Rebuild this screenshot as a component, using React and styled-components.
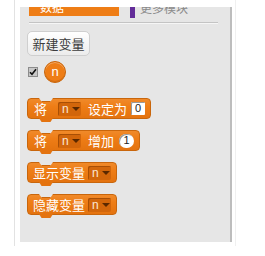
import React from "react";
import styled, { createGlobalStyle } from "styled-components";

const Global = createGlobalStyle`
  html, body { margin: 0; padding: 0; background: #ffffff; }
  body { width: 265px; height: 256px; overflow: hidden; font-family: "Noto Sans CJK SC", "Liberation Sans", sans-serif; }
`;

const ORANGE = "#ee7d16";
const ORANGE_DARK = "#c9660c";
const PANEL = "#e6e6e6";

const Frame = styled.div`
  margin-left: 14px;
  width: 222px;
  height: 246px;
  padding: 7px 0 0 5px;
  box-sizing: border-box;
  border-left: 1px solid #e2e2e2;
  border-right: 1px solid #f0f0f0;
`;

const Panel = styled.div`
  width: 212px;
  height: 235px;
  box-sizing: border-box;
  background: ${PANEL};
  border-right: 2px solid #bdbdbd;
  overflow: hidden;
  padding-left: 7px;
  display: flex;
  flex-direction: column;
  align-items: flex-start;
`;

const CategoryRow = styled.div`
  display: flex;
  align-items: center;
  margin-top: -9px;
  margin-left: 2px;
  height: 18px;
  gap: 11px;
`;

const CategoryButton = styled.div`
  width: 90px;
  height: 18px;
  box-sizing: border-box;
  padding-left: 11px;
  line-height: 18px;
  font-size: 12px;
  color: #ffffff;
  background: ${(p) => (p.$active ? p.$color : "transparent")};
  border-left: ${(p) => (p.$active ? "none" : `5px solid ${p.$color}`)};
  ${(p) => (!p.$active ? "padding-left: 5px; color: #8a8a8a; height: 20px; line-height: 20px; margin-top: 2px;" : "")}
`;

const Separator = styled.div`
  width: 189px;
  height: 1px;
  margin: 6px 0 0 2px;
  background: #c4c4c4;
  box-shadow: 0 1px 0 #f6f6f6;
`;

const NewButton = styled.button`
  margin-top: 8px;
  width: 63px;
  height: 25px;
  padding: 0;
  border: 1px solid #cfcfcf;
  border-radius: 5px;
  background: linear-gradient(#ffffff, #ececec);
  font-family: "Noto Sans CJK SC", sans-serif;
  font-size: 13px;
  color: #3c3c3c;
  line-height: 23px;
`;

const ReporterRow = styled.div`
  margin-top: 5px;
  margin-left: 1px;
  display: flex;
  align-items: center;
  gap: 6px;
`;

const Check = styled.span`
  width: 10px;
  height: 10px;
  box-sizing: border-box;
  border: 1px solid #8c8c8c;
  background: #c8c8c8;
  display: flex;
  align-items: center;
  justify-content: center;
`;

const Reporter = styled.div`
  width: 22px;
  height: 22px;
  box-sizing: border-box;
  border-radius: 50%;
  background: ${ORANGE};
  border: 1px solid ${ORANGE_DARK};
  box-shadow: inset 0 1px 0 rgba(255,255,255,0.35), inset 0 -1px 0 rgba(0,0,0,0.12);
  color: #fff;
  font-family: "Liberation Sans", sans-serif;
  font-size: 13px;
  line-height: 20px;
  text-align: center;
`;

const Block = styled.div`
  position: relative;
  margin-top: ${(p) => p.$top}px;
  height: 21px;
  box-sizing: border-box;
  padding: 0 5px 0 5px;
  display: flex;
  align-items: center;
  background: linear-gradient(#f08a2a, ${ORANGE} 40%, #e4730f);
  border: 1px solid ${ORANGE_DARK};
  border-radius: 4px;
  color: #ffffff;
  font-size: 13px;
  &::before {
    content: "";
    position: absolute;
    top: -1px;
    left: 11px;
    width: 14px;
    height: 3px;
    background: ${PANEL};
    border-bottom: 1px solid ${ORANGE_DARK};
    clip-path: polygon(0 0, 100% 0, 80% 100%, 20% 100%);
  }
  &::after {
    content: "";
    position: absolute;
    top: 100%;
    left: 11px;
    width: 14px;
    height: 4px;
    background: #e4730f;
    border-radius: 0 0 4px 4px;
    box-shadow: 0 1px 0 ${ORANGE_DARK};
    clip-path: polygon(0 0, 100% 0, 80% 100%, 20% 100%);
  }
`;

const Label = styled.span`
  margin-left: ${(p) => p.$ml || 0}px;
  line-height: 19px;
  white-space: nowrap;
`;

const Dropdown = styled.span`
  margin-left: ${(p) => p.$ml || 0}px;
  width: 23px;
  height: 14px;
  box-sizing: border-box;
  border-radius: 2px;
  background: #d2660b;
  box-shadow: inset 1px 1px 0 #a84f05;
  display: flex;
  align-items: center;
  padding-left: 4px;
  gap: 3px;
  font-family: "Liberation Sans", sans-serif;
  font-size: 12px;
  color: #fbe8d4;
`;

const Arrow = styled.span`
  width: 0;
  height: 0;
  border-left: 4px solid transparent;
  border-right: 4px solid transparent;
  border-top: 4px solid #5a2800;
`;

const NumberBox = styled.span`
  margin-left: ${(p) => p.$ml || 0}px;
  width: 14px;
  height: 13px;
  box-sizing: border-box;
  background: #ffffff;
  border-radius: ${(p) => (p.$round ? "7px" : "1px")};
  ${(p) => (p.$round ? "width: 15px; height: 14px;" : "")}
  box-shadow: inset 1px 1px 0 #9a9a9a;
  color: #222;
  font-family: "Liberation Sans", sans-serif;
  font-size: 11px;
  line-height: 13px;
  text-align: center;
`;

export default function App() {
  return (
    <>
      <Global />
      <Frame>
        <Panel>
          <CategoryRow>
            <CategoryButton $active $color={ORANGE}>数据</CategoryButton>
            <CategoryButton $color="#632d99">更多模块</CategoryButton>
          </CategoryRow>
          <Separator />
          <NewButton>新建变量</NewButton>
          <ReporterRow>
            <Check>
              <svg width="8" height="8" viewBox="0 0 8 8">
                <path d="M1 4.2 L3 6.3 L7 1.3" stroke="#111" strokeWidth="1.6" fill="none" />
              </svg>
            </Check>
            <Reporter>n</Reporter>
          </ReporterRow>
          <Block $top={15}>
            <Label $ml={1}>将</Label>
            <Dropdown $ml={11}>n<Arrow /></Dropdown>
            <Label $ml={7}>设定为</Label>
            <NumberBox $ml={4}>0</NumberBox>
          </Block>
          <Block $top={11}>
            <Label $ml={1}>将</Label>
            <Dropdown $ml={11}>n<Arrow /></Dropdown>
            <Label $ml={7}>增加</Label>
            <NumberBox $ml={5} $round>1</NumberBox>
          </Block>
          <Block $top={11}>
            <Label>显示变量</Label>
            <Dropdown $ml={3}>n<Arrow /></Dropdown>
          </Block>
          <Block $top={11}>
            <Label>隐藏变量</Label>
            <Dropdown $ml={3}>n<Arrow /></Dropdown>
          </Block>
        </Panel>
      </Frame>
    </>
  );
}
